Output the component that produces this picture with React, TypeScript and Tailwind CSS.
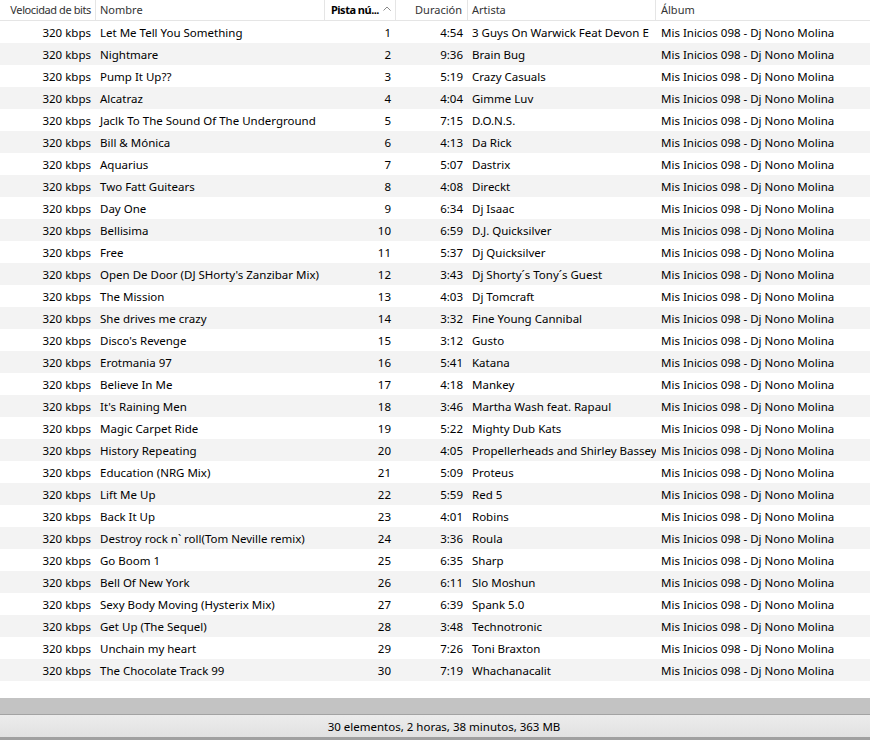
import React from 'react';

type Track = { nombre: string; dur: string; artista: string };

const tracks: Track[] = [
    { nombre: 'Let Me Tell You Something', dur: '4:54', artista: '3 Guys On Warwick Feat Devon E' },
    { nombre: 'Nightmare', dur: '9:36', artista: 'Brain Bug' },
    { nombre: 'Pump It Up??', dur: '5:19', artista: 'Crazy Casuals' },
    { nombre: 'Alcatraz', dur: '4:04', artista: 'Gimme Luv' },
    { nombre: 'Jaclk To The Sound Of The Underground', dur: '7:15', artista: 'D.O.N.S.' },
    { nombre: 'Bill & Mónica', dur: '4:13', artista: 'Da Rick' },
    { nombre: 'Aquarius', dur: '5:07', artista: 'Dastrix' },
    { nombre: 'Two Fatt Guitears', dur: '4:08', artista: 'Direckt' },
    { nombre: 'Day One', dur: '6:34', artista: 'Dj Isaac' },
    { nombre: 'Bellisima', dur: '6:59', artista: 'D.J. Quicksilver' },
    { nombre: 'Free', dur: '5:37', artista: 'Dj Quicksilver' },
    { nombre: "Open De Door (DJ SHorty's Zanzibar Mix)", dur: '3:43', artista: 'Dj Shorty´s Tony´s Guest' },
    { nombre: 'The Mission', dur: '4:03', artista: 'Dj Tomcraft' },
    { nombre: 'She drives me crazy', dur: '3:32', artista: 'Fine Young Cannibal' },
    { nombre: "Disco's Revenge", dur: '3:12', artista: 'Gusto' },
    { nombre: 'Erotmania 97', dur: '5:41', artista: 'Katana' },
    { nombre: 'Believe In Me', dur: '4:18', artista: 'Mankey' },
    { nombre: "It's Raining Men", dur: '3:46', artista: 'Martha Wash feat. Rapaul' },
    { nombre: 'Magic Carpet Ride', dur: '5:22', artista: 'Mighty Dub Kats' },
    { nombre: 'History Repeating', dur: '4:05', artista: 'Propellerheads and Shirley Bassey' },
    { nombre: 'Education (NRG Mix)', dur: '5:09', artista: 'Proteus' },
    { nombre: 'Lift Me Up', dur: '5:59', artista: 'Red 5' },
    { nombre: 'Back It Up', dur: '4:01', artista: 'Robins' },
    { nombre: 'Destroy rock n` roll(Tom Neville remix)', dur: '3:36', artista: 'Roula' },
    { nombre: 'Go Boom 1', dur: '6:35', artista: 'Sharp' },
    { nombre: 'Bell Of New York', dur: '6:11', artista: 'Slo Moshun' },
    { nombre: 'Sexy Body Moving (Hysterix Mix)', dur: '6:39', artista: 'Spank 5.0' },
    { nombre: 'Get Up (The Sequel)', dur: '3:48', artista: 'Technotronic' },
    { nombre: 'Unchain my heart', dur: '7:26', artista: 'Toni Braxton' },
    { nombre: 'The Chocolate Track 99', dur: '7:19', artista: 'Whachanacalit' },
];

const cols = 'grid grid-cols-[96px_229px_71px_72px_188px_1fr]';

export default function App() {
    return (
        <div
            className="h-[740px] w-[870px] flex flex-col bg-white text-[11.5px] text-black overflow-hidden whitespace-nowrap"
            style={{ fontFamily: '"Noto Sans", "Open Sans", sans-serif' }}
        >
            {/* cabecera de columnas */}
            <div className={`${cols} h-[21px] border-b border-[#e5e5e5] text-[#333] text-[11px]`}>
                <div className="pr-[4px] border-r border-[#e5e5e5] flex items-center justify-end overflow-hidden tracking-[-0.4px]">Velocidad de bits</div>
                <div className="pl-[4px] border-r border-[#e5e5e5] flex items-center">Nombre</div>
                <div className="pl-[6px] border-r border-[#e5e5e5] flex items-center gap-[4px] font-bold text-black overflow-hidden tracking-[-0.5px]">
                    <span>Pista nú...</span>
                    <svg width="8" height="5" viewBox="0 0 8 5" className="mb-[3px] shrink-0">
                        <polyline points="0.5,4.5 4,1 7.5,4.5" fill="none" stroke="#8a8a8a" strokeWidth="1" />
                    </svg>
                </div>
                <div className="pr-[5px] border-r border-[#e5e5e5] flex items-center justify-end">Duración</div>
                <div className="pl-[4px] border-r border-[#e5e5e5] flex items-center">Artista</div>
                <div className="pl-[5px] flex items-center">Álbum</div>
            </div>

            {/* filas */}
            <div className="flex-1">
                {tracks.map((t, i) => (
                    <div key={i} className={`${cols} h-[22px] pt-[1px] items-center ${i % 2 === 1 ? 'bg-[#f3f3f3]' : 'bg-white'}`}>
                        <div className="text-right pr-[5px]">320 kbps</div>
                        <div className="pl-[4px] overflow-hidden">{t.nombre}</div>
                        <div className="text-right pr-[5px]">{i + 1}</div>
                        <div className="text-right pr-[5px]">{t.dur}</div>
                        <div className="pl-[4px] overflow-hidden">{t.artista}</div>
                        <div className="pl-[5px] overflow-hidden">Mis Inicios 098 - Dj Nono Molina</div>
                    </div>
                ))}
            </div>

            {/* barra inferior */}
            <div className="h-[16px] bg-[#c3c3c3]" />
            <div className="h-[1px] bg-[#a3a3a3]" />
            <div className="h-[22px] pt-[1px] bg-gradient-to-b from-[#ececec] to-[#e1e1e1] flex items-center justify-center pl-[18px] text-black">
                30 elementos, 2 horas, 38 minutos, 363 MB
            </div>
            <div className="h-[3px] bg-[#a0a0a0]" />
        </div>
    );
}
